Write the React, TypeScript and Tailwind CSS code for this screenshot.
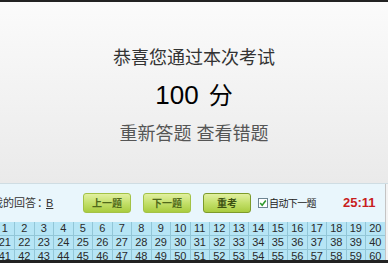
import React from "react";

const cjk = '"Liberation Sans", "Noto Sans CJK SC", sans-serif';

function Btn({ label, active }: { label: string; active?: boolean }) {
  return (
    <div
      className={`w-[48px] h-[20px] rounded-[3px] flex items-center justify-center text-[10px] font-bold bg-gradient-to-b from-[#e2f0a0] via-[#c4e06a] to-[#a9cc3e] ${
        active ? "border border-[#7d9b2a] text-[#3d5212]" : "border border-[#a3c246] text-[#4f681a]"
      }`}
      style={{ fontFamily: cjk }}
    >
      {label}
    </div>
  );
}

export default function App() {
  const rows = [0, 1, 2];
  const cols = Array.from({ length: 20 }, (_, i) => i);
  return (
    <div className="w-[388px] h-[263px] overflow-hidden flex flex-col bg-white" style={{ fontFamily: cjk }}>
      <div className="h-[2px] bg-[#222222]" />
      <div className="h-[181px] bg-gradient-to-b from-[#fbfbfb] to-[#eaeaea] flex flex-col items-center">
        <div className="mt-[47px] h-[18px] leading-[18px] text-[18px] text-[#333333]">恭喜您通过本次考试</div>
        <div className="mt-[15px] h-[26px] leading-[26px] flex items-baseline text-black">
          <span className="text-[26px]" style={{ fontFamily: '"Liberation Sans", sans-serif' }}>100</span>
          <span className="text-[24px] ml-[10px]">分</span>
        </div>
        <div className="mt-[17px] h-[18px] leading-[18px] text-[18px] text-[#555555] whitespace-pre">重新答题 查看错题</div>
      </div>
      <div className="h-[39px] flex border-t border-[#cfdde3] bg-[#e9f6fc]">
        <div className="flex-1 flex items-center">
          <div className="ml-[-8px] text-[11px] text-[#333333] flex items-center w-[91px] whitespace-nowrap">
            <span>我的回答</span>
            <span className="w-[5px] overflow-hidden ml-[1px]">：</span>
            <span className="underline ml-[4px]" style={{ fontFamily: '"Liberation Sans", sans-serif' }}>B</span>
          </div>
          <Btn label="上一题" />
          <div className="w-[12px]" />
          <Btn label="下一题" />
          <div className="w-[12px]" />
          <Btn label="重考" active />
          <div className="ml-[7px] w-[85px] flex items-center">
            <svg width="10" height="10" viewBox="0 0 10 10">
              <rect x="0.5" y="0.5" width="9" height="9" fill="#fff" stroke="#6d8592" />
              <path d="M2.2 5 L4.2 7.2 L7.8 2.6" fill="none" stroke="#2e9a2e" strokeWidth="1.6" />
            </svg>
            <span className="ml-[1px] text-[10px] tracking-[-0.6px] text-[#222222] whitespace-nowrap">自动下一题</span>
          </div>
          <div className="text-[13px] font-bold text-[#c81e1e]" style={{ fontFamily: '"Liberation Sans", sans-serif' }}>
            25:11
          </div>
        </div>
        <div className="w-[3px] border-l border-[#c4c4c4] bg-[#f3f3f3]" />
      </div>
      <div className="h-[38px] flex overflow-hidden">
        <div className="flex-1 overflow-hidden">
          <div className="ml-[-4.5px] grid grid-cols-[repeat(20,19.5px)] bg-[#b6e5f5]">
            {rows.map((r) =>
              cols.map((c) => (
                <div
                  key={`${r}-${c}`}
                  className="h-[14px] border-r border-b border-[#92c6d7] flex items-center justify-center text-[11px] leading-none text-[#2a2a2a]"
                  style={{ fontFamily: '"Liberation Sans", sans-serif' }}
                >
                  {r * 20 + c + 1}
                </div>
              ))
            )}
          </div>
        </div>
        <div className="w-[3px] border-l border-[#c4c4c4] bg-[#f3f3f3]" />
      </div>
      <div className="h-[3px] bg-[#222222]" />
    </div>
  );
}
